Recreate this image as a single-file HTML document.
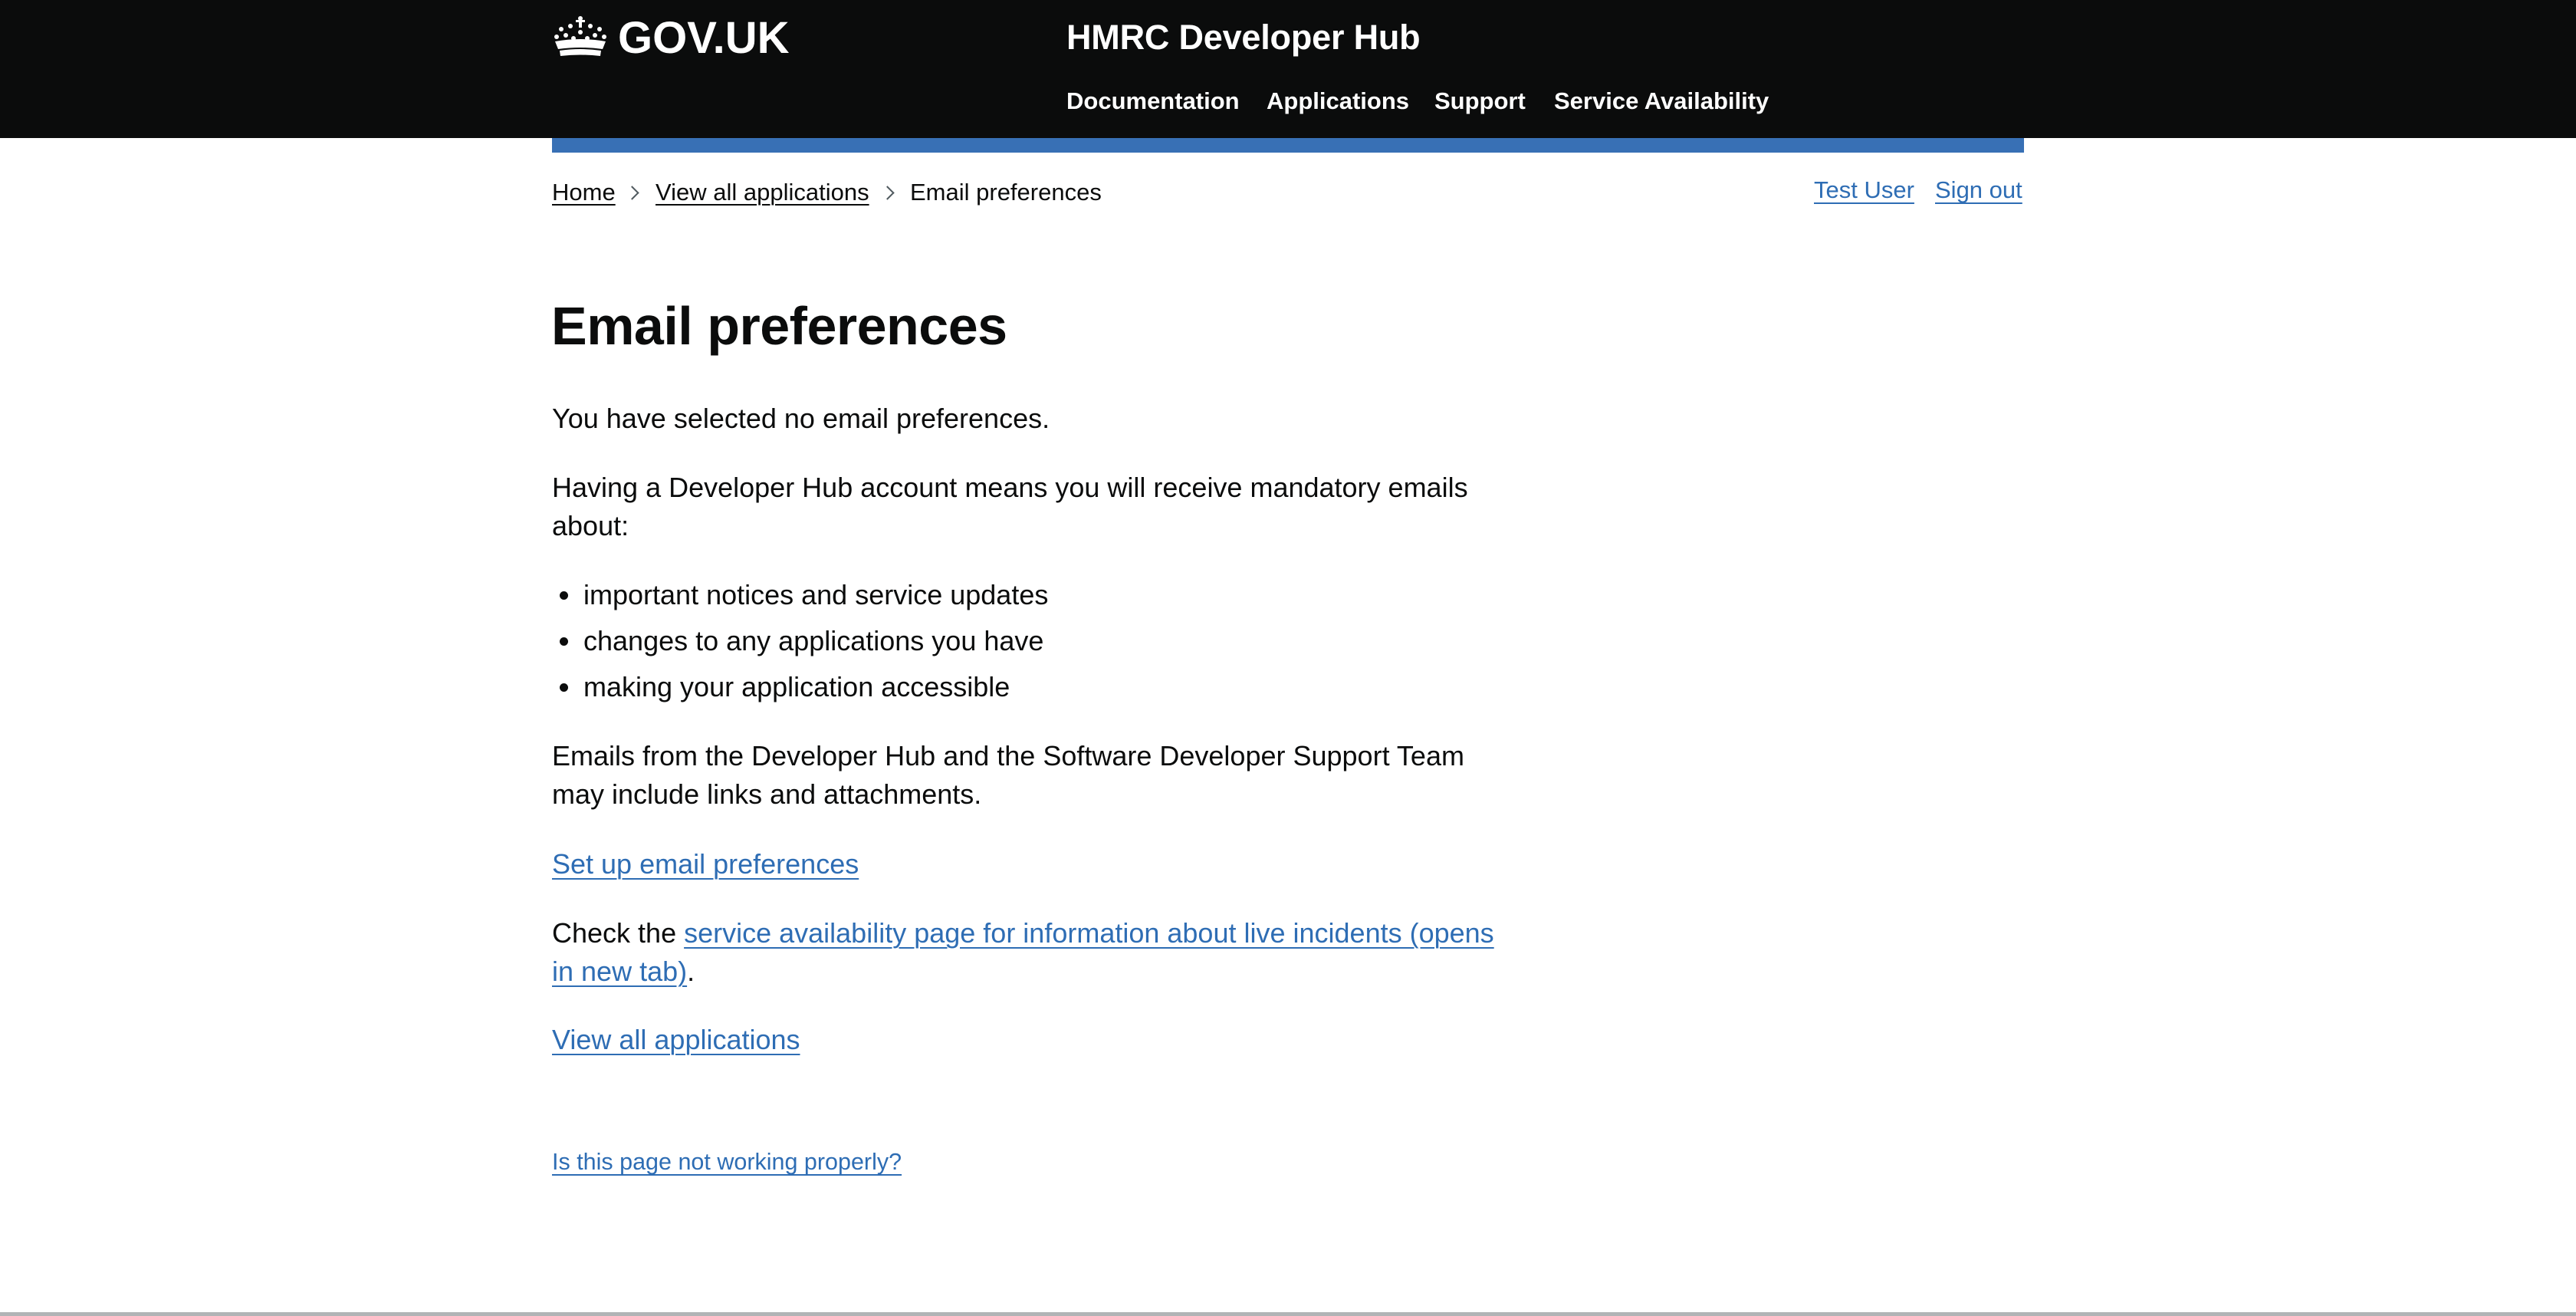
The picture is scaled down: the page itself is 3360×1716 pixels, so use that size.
<!DOCTYPE html>
<html><head><meta charset="utf-8"><style>
*{margin:0;padding:0;box-sizing:border-box}
body{width:3360px;height:1716px;background:#fff;font-family:"Liberation Sans",sans-serif;color:#0b0c0c;position:relative;overflow:hidden}
.hdr{position:absolute;left:0;top:0;width:3360px;height:180px;background:#0b0c0c}
.bar{position:absolute;left:720px;top:180px;width:1920px;height:19px;background:#3870b5}
.a{position:absolute;white-space:nowrap}
.w{color:#fff;font-weight:bold}
.nav{font-size:31px;top:112px;line-height:40px}
.bc{font-size:31px;line-height:40px;top:231px}
.bc u{text-decoration-thickness:2px;text-underline-offset:5px}
.lk{color:#2e6db4;text-decoration:underline;text-decoration-thickness:2px;text-underline-offset:6px}
.p{font-size:36px;line-height:50px;left:720px}
.chev{position:absolute;width:13px;height:13px;border-top:2px solid #505a5f;border-right:2px solid #505a5f;transform:rotate(45deg);top:245px}
.dot{position:absolute;left:730px;width:11px;height:11px;border-radius:50%;background:#0b0c0c}
</style></head><body>
<div class="hdr"></div>
<svg class="a" style="left:720px;top:20px" width="74" height="54" viewBox="0 0 74 54">
<g fill="#fff">
<circle cx="37" cy="4" r="3"/><rect x="35" y="2" width="4" height="14"/><rect x="31" y="6" width="12" height="3"/>
<circle cx="24" cy="14" r="3"/><circle cx="50" cy="14" r="3"/>
<circle cx="12" cy="18" r="3"/><circle cx="62" cy="18" r="3"/>
<circle cx="6" cy="28" r="3"/><circle cx="68" cy="28" r="3"/>
<circle cx="18" cy="26" r="3"/><circle cx="56" cy="26" r="3"/><circle cx="37" cy="22" r="3"/>
<circle cx="28" cy="30" r="3"/><circle cx="46" cy="30" r="3"/>
<path d="M4 34 Q37 28 70 34 L66 44 Q37 40 8 44 Z"/>
<path d="M10 46 Q37 42 64 46 L63 53 Q37 50 11 53 Z"/>
</g></svg>
<div class="a w" style="left:806px;top:15px;font-size:58px;line-height:70px">GOV.UK</div>
<div class="a w" style="left:1391px;top:21px;font-size:45px;line-height:56px;letter-spacing:-0.2px">HMRC Developer Hub</div>
<div class="a w nav" style="left:1391px">Documentation</div>
<div class="a w nav" style="left:1652px">Applications</div>
<div class="a w nav" style="left:1871px">Support</div>
<div class="a w nav" style="left:2027px">Service Availability</div>
<div class="bar"></div>
<div class="a bc" style="left:720px"><u>Home</u></div>
<div class="chev" style="left:818px"></div>
<div class="a bc" style="left:855px"><u>View all applications</u></div>
<div class="chev" style="left:1151px"></div>
<div class="a bc" style="left:1187px">Email preferences</div>
<div class="a bc lk" style="left:2366px;top:228px">Test User</div>
<div class="a bc lk" style="left:2524px;top:228px">Sign out</div>
<div class="a" style="left:719px;top:380px;font-size:70px;line-height:90px;font-weight:bold;letter-spacing:-0.5px">Email preferences</div>
<div class="a p" style="top:521px">You have selected no email preferences.</div>
<div class="a p" style="top:611px">Having a Developer Hub account means you will receive mandatory emails<br>about:</div>
<div class="dot" style="top:771px"></div><div class="a p" style="left:761px;top:751px">important notices and service updates</div>
<div class="dot" style="top:831px"></div><div class="a p" style="left:761px;top:811px">changes to any applications you have</div>
<div class="dot" style="top:891px"></div><div class="a p" style="left:761px;top:871px">making your application accessible</div>
<div class="a p" style="top:961px">Emails from the Developer Hub and the Software Developer Support Team<br>may include links and attachments.</div>
<div class="a p" style="top:1102px"><span class="lk">Set up email preferences</span></div>
<div class="a p" style="top:1192px">Check the <span class="lk">service availability page for information about live incidents (opens</span><br><span class="lk">in new tab)</span>.</div>
<div class="a p" style="top:1331px"><span class="lk">View all applications</span></div>
<div class="a lk" style="left:720px;top:1495px;font-size:30.5px;line-height:40px">Is this page not working properly?</div>
<div class="a" style="left:0;top:1711px;width:3360px;height:5px;background:#b1b4b6"></div>
</body></html>
